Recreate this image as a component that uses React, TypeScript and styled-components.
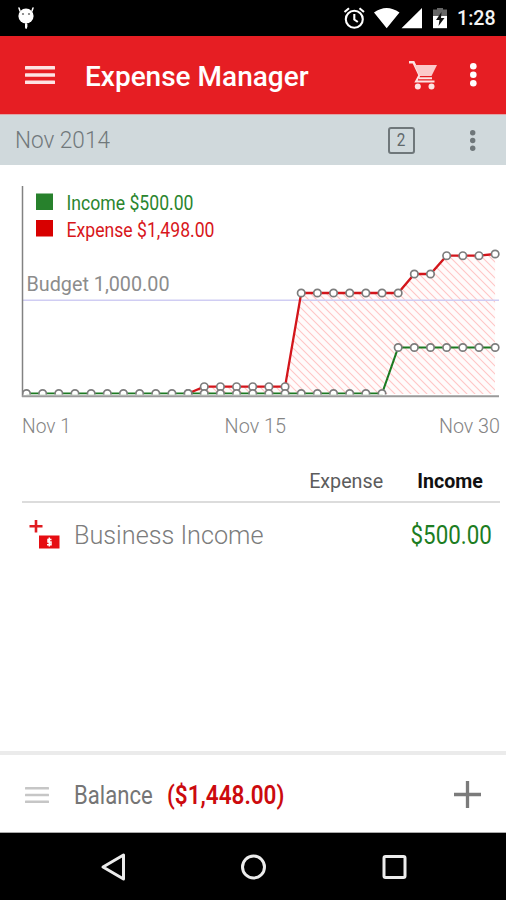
import React from "react";
import styled, { createGlobalStyle } from "styled-components";

const Global = createGlobalStyle`
  * { box-sizing: border-box; }
  body { margin: 0; background: #fff; font-family: Roboto, "Open Sans", sans-serif; }
`;

const Screen = styled.div`
  width: 506px;
  height: 900px;
  display: flex;
  flex-direction: column;
  background: #fff;
  overflow: hidden;
`;

const Label = styled.span<{ $size: number; $color: string; $weight?: number; $squeeze?: number; $origin?: string }>`
  display: inline-block;
  white-space: pre;
  font-size: ${(p) => p.$size}px;
  line-height: 1.2;
  color: ${(p) => p.$color};
  font-weight: ${(p) => p.$weight ?? 400};
  transform: scaleX(${(p) => p.$squeeze ?? 1});
  transform-origin: ${(p) => p.$origin ?? "left"} center;
`;

const Icon = styled.svg`
  display: block;
  flex: none;
  overflow: visible;
`;

const StatusBar = styled.header`
  height: 36px;
  flex: none;
  display: flex;
  align-items: center;
  background: #000;
  padding: 0 10px 0 17px;
`;

const StatusIcons = styled.div`
  display: flex;
  align-items: center;
  margin-left: auto;
`;

const AppBar = styled.div`
  height: 78px;
  flex: none;
  display: flex;
  align-items: center;
  background: #e61e23;
  padding: 0 29.7px 0 25px;
`;

const AppTitle = styled.h1`
  margin: 3px 0 0 30px;
  flex: 1;
  font-size: 0;
`;

const CartButton = styled.div`
  margin-right: 33px;
`;

const MonthBar = styled.div`
  height: 51px;
  flex: none;
  display: flex;
  align-items: center;
  background: #d0d9dc;
  border-top: 1px solid #e0a5a8;
  padding: 0 31px 0 15px;
`;

const CountBox = styled.div`
  width: 27px;
  height: 27px;
  margin: 0 54.6px 0 auto;
  display: flex;
  align-items: center;
  justify-content: center;
  border: 2px solid #6f777a;
  border-radius: 3px;
`;

const ChartSection = styled.section`
  height: 245px;
  flex: none;
`;

const AxisLabels = styled.div`
  height: 36px;
  flex: none;
  display: flex;
  justify-content: space-between;
  padding: 4px 6px 0 22px;
`;

const TabRow = styled.div`
  height: 57px;
  flex: none;
  margin: 0 6px 0 22px;
  padding: 23px 17px 0 0;
  display: flex;
  justify-content: flex-end;
  gap: 33px;
  border-bottom: 2px solid #dcdcdc;
`;

const CategoryRow = styled.div`
  height: 64px;
  flex: none;
  display: flex;
  align-items: center;
  padding: 2px 14px 0 28px;
  gap: 14px;
`;

const Amount = styled.div`
  margin-left: auto;
`;

const BalanceBar = styled.footer`
  height: 82px;
  flex: none;
  margin-top: auto;
  display: flex;
  align-items: center;
  border-top: 4px solid #ebebeb;
  border-bottom: 1px solid #aaa;
  padding: 2px 25px 0 25px;
`;

const BalanceText = styled.div`
  display: flex;
  gap: 4px;
  margin: 2px 0 0 25px;
`;

const NavBar = styled.nav`
  height: 67px;
  flex: none;
  display: flex;
  align-items: center;
  justify-content: center;
  gap: 114.5px;
  background: #000;
`;

const Lines = ({ w, h, gap, color }: { w: number; h: number; gap: number; color: string }) => (
  <Icon width={w} height={gap * 2 + h} fill={color}>
    {[0, 1, 2].map((i) => <rect key={i} y={i * gap} width={w} height={h} rx={0.5} />)}
  </Icon>
);

const Dots = ({ r, gap, color }: { r: number; gap: number; color: string }) => (
  <Icon width={r * 2} height={gap * 2 + r * 2} fill={color}>
    {[0, 1, 2].map((i) => <circle key={i} cx={r} cy={r + i * gap} r={r} />)}
  </Icon>
);

const STEP = 16.16;
const BASE = 228.5;
const dayX = (d: number) => 26.5 + (d - 1) * STEP;
const expenseY = (d: number) =>
  d < 12 ? BASE : d < 18 ? 221.7 : d < 25 ? 128 : d < 27 ? 109 : d < 30 ? 90.7 : 89;
const incomeY = (d: number) => (d < 24 ? BASE : 182.5);
const days = Array.from({ length: 30 }, (_, i) => i + 1);
const spendingDays = days.slice(10);
const points = (list: number[], y: (d: number) => number) => list.map((d) => `${dayX(d)},${y(d)}`).join(" ");
const hatchPath = Array.from({ length: 60 }, (_, i) => `M${30 + i * 8} 80l152 152`).join("");

const ChartText = styled.text`
  font-family: Roboto, sans-serif;
  font-size: 20px;
`;

const Chart = () => (
  <Icon width="506" height="245">
    <defs>
      <clipPath id="spending"><polygon points={`${points(spendingDays, expenseY)} 495,229 188,229`} /></clipPath>
      <clipPath id="plot"><rect x="23" y="0" width="483" height="229.5" /></clipPath>
    </defs>
    <g clipPath="url(#spending)">
      <rect x="180" y="80" width="320" height="152" fill="#fffbfb" />
      <path d={hatchPath} fill="none" stroke="#ffc6c6" strokeWidth="1.1" />
    </g>
    <path d="M22 135.3H499" stroke="#d0cdf3" strokeWidth="1.4" />
    <path d="M22.5 21V232" stroke="#828282" strokeWidth="1.5" />
    <path d="M22 231.3H499" stroke="#9a9a9a" strokeWidth="2" />
    <g clipPath="url(#plot)" fill="none">
      <polyline points={points(spendingDays, expenseY)} stroke="#d3151b" strokeWidth="2.3" />
      <polyline points={points(days, incomeY)} stroke="#1c7a22" strokeWidth="2.1" />
      <g fill="#fff" stroke="#7d7d7d" strokeWidth="1.7">
        {spendingDays.map((d) => <circle key={`e${d}`} cx={dayX(d)} cy={expenseY(d)} r="3.7" />)}
        {days.map((d) => <circle key={`i${d}`} cx={dayX(d)} cy={incomeY(d)} r="3.7" />)}
      </g>
    </g>
    <rect x="36" y="28.500" width="17" height="16.5" fill="#27812c" />
    <rect x="36" y="55" width="17" height="16.5" fill="#d80000" />
    <ChartText x="66.5" y="45" fill="#2a852e" textLength="127" lengthAdjust="spacingAndGlyphs">Income $500.00</ChartText>
    <ChartText x="66.5" y="72" fill="#d8161b" textLength="148" lengthAdjust="spacingAndGlyphs">Expense $1,498.00</ChartText>
    <ChartText x="26.5" y="125.5" fill="#8c8c8c" textLength="143" lengthAdjust="spacingAndGlyphs">Budget 1,000.00</ChartText>
  </Icon>
);

export default function App() {
  return (
    <Screen>
      <Global />
      <StatusBar>
        <Icon width="18" height="24" viewBox="0 0 18 24" fill="#fff">
          <path d="M3 5L2 2M15 5l1-3M9 16v6" stroke="#fff" strokeWidth="1.5" strokeLinecap="round" />
          <ellipse cx="9" cy="10" rx="7.6" ry="7.4" />
          <circle cx="6" cy="8" r="1.1" fill="#777" /><circle cx="12" cy="8" r="1.1" fill="#777" />
          <path d="M8 18h2.400v3l-1.200 2-1.200-2z" />
        </Icon>
        <StatusIcons>
          <Icon width="114" height="24" viewBox="343 6 114 24">
            <g fill="none" stroke="#fff" strokeWidth="2.100">
              <circle cx="354.300" cy="19.200" r="8.500" />
              <path d="M354.300 14v5.500l3.500 2.500M344.500 12l4.500-3.700M364 12l-4.500-3.700" />
            </g>
            <path d="M374 12.500Q386.500 3.500 399.500 12.500L386.700 28.200ZM422 8V28.200H401.500Z" fill="#fff" />
            <path d="M433 16v-6.500h4V8h6v1.500h4V16z" fill="#666" />
            <path d="M433 16h14v12.200H433z" fill="#fff" />
            <path d="M441.500 12l-5.500 8h3.500l-1 6 6-8h-3.500z" fill="#111" />
          </Icon>
          <Label $size={20} $color="#f4f4f4" $weight={500} $squeeze={0.98}>1:28</Label>
        </StatusIcons>
      </StatusBar>
      <AppBar>
        <Lines w={30} h={3.6} gap={7.2} color="#fde4e4" />
        <AppTitle><Label $size={27.5} $color="#fff" $weight={500} $squeeze={1.018}>Expense Manager</Label></AppTitle>
        <CartButton>
          <Icon width="28" height="28" viewBox="0 0 28 28">
            <path d="M0 1.300H4.500L10.500 14" fill="none" stroke="#fde4e4" strokeWidth="2.500" />
            <path d="M5.500 4H28L22.500 15H10.500z" fill="#fcc9ca" />
            <path d="M10.500 14l-3.500 6.500H25.500M10 17.300H23" fill="none" stroke="#fde4e4" strokeWidth="2" />
            <circle cx="8.800" cy="25.500" r="3" fill="#fde4e4" /><circle cx="22.500" cy="25.500" r="3" fill="#fde4e4" />
          </Icon>
        </CartButton>
        <Dots r={3.3} gap={8.5} color="#fff" />
      </AppBar>
      <MonthBar>
        <Label $size={24} $color="#70787b" $weight={300} $squeeze={0.94}>Nov 2014</Label>
        <CountBox><Label $size={18} $color="#5f686b" $squeeze={0.85} $origin="center">2</Label></CountBox>
        <Dots r={2.7} gap={7.8} color="#6f777a" />
      </MonthBar>
      <ChartSection><Chart /></ChartSection>
      <AxisLabels>
        <Label $size={20} $color="#848484" $weight={300} $squeeze={0.96}>Nov 1</Label>
        <Label $size={20} $color="#848484" $weight={300} $squeeze={0.99} $origin="right">Nov 15</Label>
        <Label $size={20} $color="#848484" $weight={300} $squeeze={0.985} $origin="right">Nov 30</Label>
      </AxisLabels>
      <TabRow>
        <Label $size={20} $color="#5c5c5c" $squeeze={0.985} $origin="right">Expense</Label>
        <Label $size={20} $color="#111" $weight={700} $squeeze={0.98} $origin="right">Income</Label>
      </TabRow>
      <CategoryRow>
        <Icon width="32" height="32" viewBox="28 519 32 32">
          <path d="M36 519v12.500M29.500 525.300h13" stroke="#e01b20" strokeWidth="2.600" />
          <rect x="39" y="534.500" width="20.500" height="13" fill="#e60d12" />
          <path d="M51.500 538.500h-3.500v2.500h3v2.800h-4M49.300 536.500v9" fill="none" stroke="#fff" strokeWidth="1.500" />
        </Icon>
        <Label $size={26} $color="#7c7c7c" $weight={300} $squeeze={0.97}>Business Income</Label>
        <Amount><Label $size={25} $color="#1c7d22" $squeeze={0.895} $origin="right">$500.00</Label></Amount>
      </CategoryRow>
      <BalanceBar>
        <Lines w={24} h={2.4} gap={6.800} color="#c6c6c6" />
        <BalanceText>
          <Label $size={25} $color="#757575" $squeeze={0.885}>Balance</Label>
          <Label $size={25} $color="#cc0a0e" $weight={600} $squeeze={0.9}>($1,448.00)</Label>
        </BalanceText>
        <Amount>
          <Icon width="27" height="27"><path d="M13.500 0v27M0 13.500h27" stroke="#7b7b7b" strokeWidth="3.300" /></Icon>
        </Amount>
      </BalanceBar>
      <NavBar>
        <Icon width="26" height="28" fill="none" stroke="#ececec" strokeWidth="3" strokeLinejoin="round"><path d="M23.500 2v24L3 14z" /></Icon>
        <Icon width="26" height="26" fill="none" stroke="#ececec" strokeWidth="3"><circle cx="13.500" cy="13" r="11" /></Icon>
        <Icon width="26" height="26" fill="none" stroke="#ececec" strokeWidth="3"><rect x="3" y="2.500" width="21" height="21" rx="1.500" /></Icon>
      </NavBar>
    </Screen>
  );
}
